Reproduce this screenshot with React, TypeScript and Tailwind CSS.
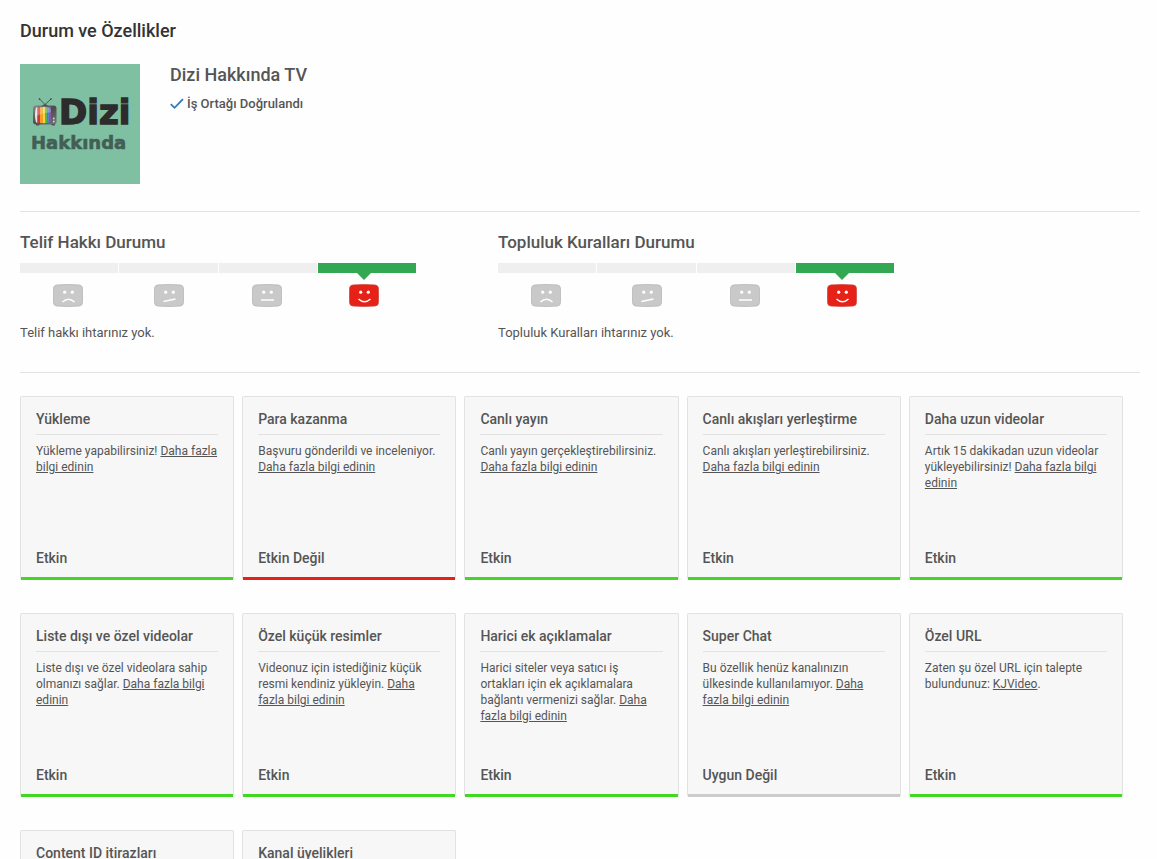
import { clsx } from 'clsx'

type Mood = 'sad' | 'unsure' | 'neutral' | 'happy'
type State = 'active' | 'inactive' | 'unavailable'

interface Feature {
  title: string
  text: string
  link?: string
  after?: string
  status: string
  state: State
}

const MORE = 'Daha fazla bilgi edinin'

const FEATURES: Feature[] = [
  { title: 'Yükleme', text: 'Yükleme yapabilirsiniz!', link: MORE, status: 'Etkin', state: 'active' },
  { title: 'Para kazanma', text: 'Başvuru gönderildi ve inceleniyor.', link: MORE, status: 'Etkin Değil', state: 'inactive' },
  { title: 'Canlı yayın', text: 'Canlı yayın gerçekleştirebilirsiniz.', link: MORE, status: 'Etkin', state: 'active' },
  { title: 'Canlı akışları yerleştirme', text: 'Canlı akışları yerleştirebilirsiniz.', link: MORE, status: 'Etkin', state: 'active' },
  { title: 'Daha uzun videolar', text: 'Artık 15 dakikadan uzun videolar yükleyebilirsiniz!', link: MORE, status: 'Etkin', state: 'active' },
  { title: 'Liste dışı ve özel videolar', text: 'Liste dışı ve özel videolara sahip olmanızı sağlar.', link: MORE, status: 'Etkin', state: 'active' },
  { title: 'Özel küçük resimler', text: 'Videonuz için istediğiniz küçük resmi kendiniz yükleyin.', link: MORE, status: 'Etkin', state: 'active' },
  { title: 'Harici ek açıklamalar', text: 'Harici siteler veya satıcı iş ortakları için ek açıklamalara bağlantı vermenizi sağlar.', link: MORE, status: 'Etkin', state: 'active' },
  { title: 'Super Chat', text: 'Bu özellik henüz kanalınızın ülkesinde kullanılamıyor.', link: MORE, status: 'Uygun Değil', state: 'unavailable' },
  { title: 'Özel URL', text: 'Zaten şu özel URL için talepte bulundunuz:', link: 'KJVideo', after: '.', status: 'Etkin', state: 'active' },
  { title: 'Content ID itirazları', text: '', status: '', state: 'active' },
  { title: 'Kanal üyelikleri', text: '', status: '', state: 'active' },
]

const MOUTHS: Record<Mood, string> = {
  sad: 'M9.5 18 Q15.5 12.5 21.5 18',
  unsure: 'M9.5 17.5 L21.5 15',
  neutral: 'M9 16 H22',
  happy: 'M9.5 15 Q15.5 20.5 21.5 15',
}

function Face({ mood }: { mood: Mood }) {
  const happy = mood === 'happy'
  return (
    <svg className="h-[23px] w-[30px]" viewBox="0 0 30 23" fill="none" aria-hidden="true">
      <path
        d="M4 0.9 Q15 0 26 0.9 Q29.2 1.2 29.4 4 Q30 11.5 29.4 19 Q29.2 21.8 26 22.1 Q15 23 4 22.1 Q0.8 21.8 0.6 19 Q0 11.5 0.6 4 Q0.8 1.2 4 0.9Z"
        fill={happy ? '#e62117' : '#c9c9c9'}
        stroke={happy ? '#c9473f' : '#b0b0b0'}
        strokeWidth="0.7"
      />
      <circle cx="11.7" cy="8.2" r="1.6" fill="#fff" />
      <circle cx="19.3" cy="8.2" r="1.6" fill="#fff" />
      <path d={MOUTHS[mood]} stroke="#fff" strokeWidth="1.5" />
    </svg>
  )
}

function ChannelLogo() {
  return (
    <svg className="h-[120px] w-[120px] shrink-0" viewBox="0 0 120 120" role="img" aria-label="Dizi Hakkında">
      <defs>
        <linearGradient id="tv-body" x1="0" y1="0" x2="1" y2="1">
          <stop offset="0" stopColor="#8b8b8b" />
          <stop offset="0.5" stopColor="#4c4c4c" />
          <stop offset="1" stopColor="#777" />
        </linearGradient>
        <clipPath id="tv-screen">
          <path d="M16 43.5 Q24.5 42.3 30.5 43.5 Q31.8 51 30.5 58.5 Q24 59.8 16 58.5 Q14 51 16 43.5Z" />
        </clipPath>
      </defs>
      <rect width="120" height="120" fill="#80c0a2" />
      {/* antenna */}
      <path d="M19.5 35 L25.5 41 M31 35 L24.5 41" stroke="#454b48" strokeWidth="0.9" />
      <circle cx="19.5" cy="35" r="0.8" fill="#333" />
      <circle cx="31" cy="35" r="0.8" fill="#333" />
      <path d="M21.5 42 Q25 38.5 28.5 42Z" fill="#444" />
      {/* set */}
      <rect x="13" y="41.5" width="23.5" height="19" rx="3" fill="url(#tv-body)" />
      <path d="M16 60 h4 l-1 1.6 h-3z M31 60 h4 v1.6 h-3z" fill="#555" />
      <g clipPath="url(#tv-screen)">
        <rect x="14" y="42" width="3.5" height="18" fill="#e9e3dd" />
        <rect x="17.5" y="42" width="2.5" height="18" fill="#c93b35" />
        <rect x="20" y="42" width="3" height="18" fill="#f3a02a" />
        <rect x="23" y="42" width="2.5" height="18" fill="#f2d83e" />
        <rect x="25.5" y="42" width="2" height="18" fill="#58b25a" />
        <rect x="27.5" y="42" width="1.5" height="18" fill="#5d82cb" />
        <rect x="29" y="42" width="3" height="18" fill="#8559a5" />
        <path d="M14 42 H34 V48 Q24 48 14 53Z" fill="#fff" opacity="0.25" />
      </g>
      <circle cx="33.8" cy="54.5" r="0.9" fill="#d5d5d5" />
      <circle cx="33.8" cy="57.5" r="0.9" fill="#d5d5d5" />
      <text x="39" y="60" fill="#2d2c2c" stroke="#2d2c2c" strokeWidth="1.4" className="font-['DejaVu_Sans',sans-serif] text-[34px] font-bold">
        Dizi
      </text>
      <text x="11" y="85" fill="#425f55" stroke="#425f55" strokeWidth="0.6" className="font-['DejaVu_Sans',sans-serif] text-[18px] font-bold">
        Hakkında
      </text>
    </svg>
  )
}

function StandingMeter({ title, note }: { title: string; note: string }) {
  return (
    <section>
      <h2 className="text-[17px] leading-5 font-medium">{title}</h2>
      <div className="mt-[11px] grid h-2.5 w-[396px] max-w-full grid-cols-4 gap-px">
        <div className="bg-[#efefef]" />
        <div className="bg-[#efefef]" />
        <div className="bg-[#efefef]" />
        <div className="relative bg-[#32a852]">
          <svg className="absolute top-full left-[39px] h-[7px] w-3.5" viewBox="0 0 14 7" aria-hidden="true">
            <path d="M0 0 H14 L7 7Z" fill="#32a852" />
          </svg>
        </div>
      </div>
      <div className="mt-[11px] grid grid-cols-[101px_98px_97px_1fr] pl-[33px]">
        <Face mood="sad" />
        <Face mood="unsure" />
        <Face mood="neutral" />
        <Face mood="happy" />
      </div>
      <p className="mt-4 text-[13px] leading-5">{note}</p>
    </section>
  )
}

function FeatureCard({ title, text, link, after, status, state }: Feature) {
  return (
    <article className="flex min-h-[184px] flex-col rounded-xs border border-b-0 border-[#e2e2e2] bg-[#f7f7f7]">
      <div className="flex flex-1 flex-col px-[15px] pt-3">
        <h3 className="border-b border-[#e2e2e2] pb-[5px] text-sm leading-5 font-medium">{title}</h3>
        <p className="mt-2 text-xs leading-4">
          {text}{' '}
          {link && (
            <a href="#" className="underline">
              {link}
            </a>
          )}
          {after}
        </p>
        <p className="mt-auto pb-[9px] text-sm leading-5 font-medium">{status}</p>
      </div>
      <div
        className={clsx(
          'h-[3px]',
          state === 'active' && 'bg-[#41d824]',
          state === 'inactive' && 'bg-[#e62117]',
          state === 'unavailable' && 'bg-[#cccccc]'
        )}
      />
    </article>
  )
}

export default function App() {
  return (
    <main className="h-screen overflow-hidden bg-[#fefefe] pt-[19px] pr-[17px] pl-5 font-['Roboto',sans-serif] text-[#555]">
      <h1 className="text-lg leading-6 font-medium text-[#333]">Durum ve Özellikler</h1>

      <header className="mt-[21px] flex gap-[30px] border-b border-[#e2e2e2] pb-[27px]">
        <ChannelLogo />
        <div className="pt-px">
          <h2 className="text-lg leading-5 font-medium">Dizi Hakkında TV</h2>
          <p className="mt-[9px] flex items-center gap-[3px] text-[13px] leading-5 font-medium">
            <svg className="h-3 w-3.5" viewBox="0 0 14 12" fill="none" aria-hidden="true">
              <path d="M0.8 6.2 L4.5 9.8 L13 1.2" stroke="#2f78bf" strokeWidth="1.8" />
            </svg>
            İş Ortağı Doğrulandı
          </p>
        </div>
      </header>

      <div className="grid grid-cols-[minmax(0,478px)_minmax(0,1fr)] border-b border-[#e2e2e2] pt-5 pb-[29px]">
        <StandingMeter title="Telif Hakkı Durumu" note="Telif hakkı ihtarınız yok." />
        <StandingMeter title="Topluluk Kuralları Durumu" note="Topluluk Kuralları ihtarınız yok." />
      </div>

      <div className="mt-[23px] mr-[17px] grid grid-cols-5 gap-x-2 gap-y-[33px]">
        {FEATURES.map((feature) => (
          <FeatureCard key={feature.title} {...feature} />
        ))}
      </div>
    </main>
  )
}
